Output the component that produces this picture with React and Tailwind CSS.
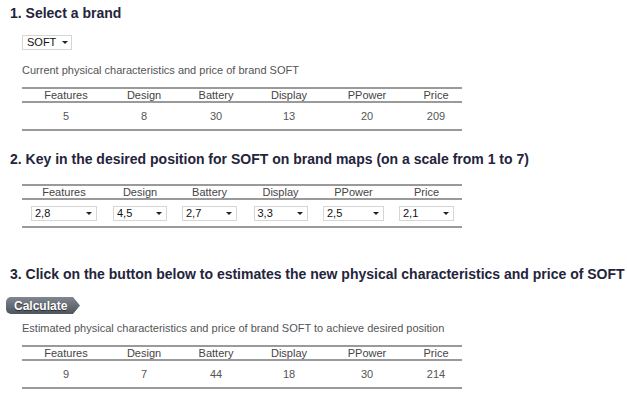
import React from 'react';

const cols1 = ['Features', 'Design', 'Battery', 'Display', 'PPower', 'Price'];
const current = [5, 8, 30, 13, 20, 209];
const estimated = [9, 7, 44, 18, 30, 214];
const desired = [
  { value: '2,8', w: 'w-[66px]' },
  { value: '4,5', w: 'w-[54px]' },
  { value: '2,7', w: 'w-[55px]' },
  { value: '3,3', w: 'w-[54px]' },
  { value: '2,5', w: 'w-[61px]' },
  { value: '2,1', w: 'w-[55px]' },
];

function FakeSelect({ value, className = '' }) {
  return (
    <div
      className={`flex h-[15px] items-center justify-between border border-[#d6d6d6] bg-white text-[11px] leading-none text-[#111] ${className}`}
    >
      <span>{value}</span>
      <span className="h-0 w-0 border-x-[3px] border-t-[3px] border-x-transparent border-t-[#222]" />
    </div>
  );
}

function DataTable({ rows }) {
  return (
    <div className="ml-[22px] w-[440px] border-y-2 border-[#9a9a9a]">
      <div className="grid h-[14px] grid-cols-[88px_68px_76px_70px_86px_52px] items-center border-b-2 border-[#9a9a9a] text-center text-[11px] leading-none text-[#444]">
        {cols1.map((c) => (
          <div key={c}>{c}</div>
        ))}
      </div>
      <div className="grid h-[26px] grid-cols-[88px_68px_76px_70px_86px_52px] items-center text-center text-[11px] leading-none text-[#555]">
        {rows.map((v, i) => (
          <div key={i}>{v}</div>
        ))}
      </div>
    </div>
  );
}

function Heading({ children, className = '' }) {
  return (
    <h2 className={`ml-[10px] text-[14px] font-bold leading-[16px] text-[#24243c] ${className}`}>
      {children}
    </h2>
  );
}

export default function App() {
  return (
    <div className="h-[403px] w-[627px] overflow-hidden bg-white pt-[5px] font-['Liberation_Sans',Arial,sans-serif]">
      <Heading>1. Select a brand</Heading>

      <FakeSelect value="SOFT" className="ml-[22px] mt-[14px] w-[50px] pl-[4px] pr-[3px]" />

      <p className="ml-[22px] mt-[13px] text-[11px] leading-[14px] text-[#555]">
        Current physical characteristics and price of brand SOFT
      </p>

      <div className="mt-[10px]">
        <DataTable rows={current} />
      </div>

      <Heading className="mt-[20px]">
        2. Key in the desired position for SOFT on brand maps (on a scale from 1 to 7)
      </Heading>

      <div className="ml-[22px] mt-[17px] w-[440px] border-y-2 border-[#9a9a9a]">
        <div className="grid h-[14px] grid-cols-[84px_68px_71px_71px_75px_71px] items-center border-b-2 border-[#9a9a9a] text-center text-[11px] leading-none text-[#444]">
          {cols1.map((c) => (
            <div key={c}>{c}</div>
          ))}
        </div>
        <div className="grid h-[26px] grid-cols-[84px_68px_71px_71px_75px_71px] items-center">
          {desired.map((d, i) => (
            <div key={i} className="flex justify-center">
              <FakeSelect value={d.value} className={`${d.w} pl-[3px] pr-[4px]`} />
            </div>
          ))}
        </div>
      </div>

      <Heading className="mt-[38px]">
        3. Click on the button below to estimates the new physical characteristics and price of SOFT
      </Heading>

      <button
        type="button"
        className="ml-[6px] mt-[15px] flex h-[17px] w-[74px] items-center rounded-l-[5px] bg-gradient-to-b from-[#808790] to-[#4f555d] pl-[8px] text-[12px] font-bold leading-none text-white [clip-path:polygon(0_0,calc(100%_-_7px)_0,100%_50%,calc(100%_-_7px)_100%,0_100%)] [text-shadow:0_1px_1px_rgba(0,0,0,0.6)]"
      >
        Calculate
      </button>

      <p className="ml-[22px] mt-[7px] text-[11px] leading-[14px] text-[#555]">
        Estimated physical characteristics and price of brand SOFT to achieve desired position
      </p>

      <div className="mt-[10px]">
        <DataTable rows={estimated} />
      </div>
    </div>
  );
}
